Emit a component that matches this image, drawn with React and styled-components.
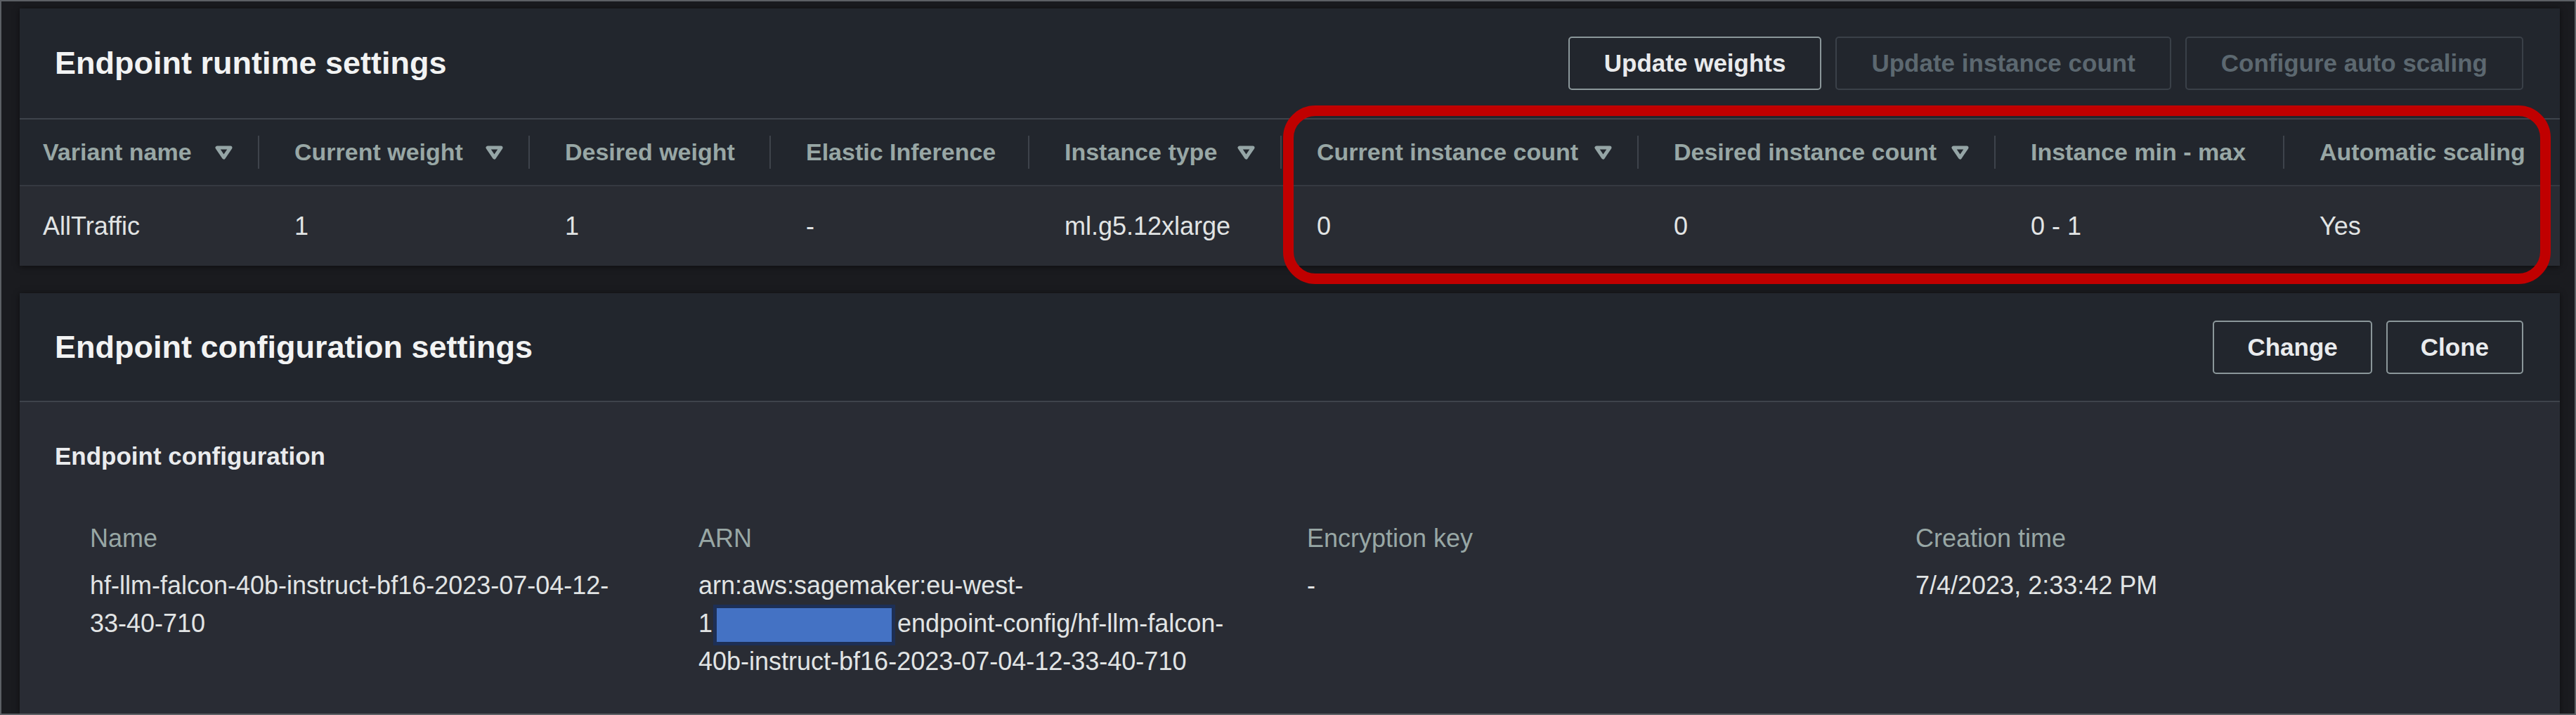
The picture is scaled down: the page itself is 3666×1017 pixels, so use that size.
import React from 'react';
import styled, { createGlobalStyle } from 'styled-components';

const GlobalStyle = createGlobalStyle`
  html, body {
    margin: 0;
    padding: 0;
    background: #1a1b1f;
  }
  body {
    font-family: "Liberation Sans", Arial, sans-serif;
  }
`;

const Frame = styled.div`
  box-sizing: border-box;
  width: 3666px;
  height: 1017px;
  border: 2px solid #5c5f64;
  padding: 10px 21px 0 26px;
  display: flex;
  flex-direction: column;
  gap: 39px;
  background: #1a1b1f;
  overflow: hidden;
`;

const Panel = styled.section`
  position: relative;
  display: flex;
  flex-direction: column;
  flex: ${(p) => (p.$grow ? 1 : 'none')};
  background: #22262d;
  box-shadow: 0 1px 8px rgba(0, 0, 0, 0.55);
`;

const PanelHeader = styled.header`
  box-sizing: border-box;
  height: ${(p) => p.$height}px;
  display: flex;
  align-items: center;
  justify-content: space-between;
  padding: 0 52px 0 50px;
  border-bottom: 2px solid #3e434b;
`;

const Title = styled.h2`
  margin: 0;
  font-size: 45px;
  line-height: 56px;
  font-weight: 700;
  color: #f2f3f3;
`;

const Actions = styled.div`
  display: flex;
  gap: 20px;
`;

const Button = styled.button`
  box-sizing: border-box;
  height: 76px;
  padding: 0 ${(p) => p.$pad ?? 49}px;
  background: transparent;
  border: 2px solid ${(p) => (p.disabled ? '#3a4048' : '#8b979a')};
  border-radius: 5px;
  color: ${(p) => (p.disabled ? '#5c6870' : '#e9ebed')};
  font: 700 35px "Liberation Sans", Arial, sans-serif;
  white-space: nowrap;
`;

// runtime table
const Table = styled.div`
  display: grid;
  grid-template-columns: ${(p) => p.$cols};
`;

const HeadCell = styled.div`
  box-sizing: border-box;
  height: 95px;
  display: flex;
  align-items: center;
  padding-left: ${(p) => (p.$first ? 33 : 50)}px;
  border-bottom: 2px solid #353941;
  color: #98a7a5;
  font-size: 34px;
  font-weight: 700;
`;

const HeadLabel = styled.span`
  flex: 1;
  white-space: nowrap;
`;

const SortIcon = styled.svg`
  width: 25px;
  height: 20px;
  margin-right: 36px;
  flex: none;
`;

const Divider = styled.span`
  width: 2px;
  height: 47px;
  background: #3e434b;
  flex: none;
`;

const BodyCell = styled.div`
  box-sizing: border-box;
  height: 113px;
  display: flex;
  align-items: center;
  padding-left: ${(p) => (p.$first ? 33 : 50)}px;
  background: #292c33;
  color: #e1e4e4;
  font-size: 36px;
  white-space: nowrap;
`;

const Annotation = styled.div`
  position: absolute;
  left: 1798px;
  top: 138px;
  width: 1804px;
  height: 254px;
  box-sizing: border-box;
  border: 15px solid #c00000;
  border-radius: 46px;
  pointer-events: none;
`;

// configuration panel
const Body = styled.div`
  flex: 1;
  background: #292c34;
  padding: 52px 51px 0 50px;
`;

const SubTitle = styled.h3`
  margin: 0;
  font-size: 35px;
  line-height: 50px;
  font-weight: 700;
  color: #e9ebed;
`;

const Fields = styled.div`
  display: grid;
  grid-template-columns: repeat(4, 866px);
  margin-top: 65px;
  padding-left: 50px;
`;

const Field = styled.div`
  display: flex;
  flex-direction: column;
`;

const FieldLabel = styled.div`
  font-size: 36px;
  line-height: 54px;
  color: #98a7a5;
`;

const FieldValue = styled.div`
  margin-top: 13px;
  font-size: 36px;
  line-height: 54px;
  color: #e1e4e4;
  white-space: nowrap;
`;

const Redacted = styled.span`
  display: inline-block;
  box-sizing: border-box;
  width: 259px;
  height: 58px;
  margin: -6px 3px -6px 1px;
  vertical-align: middle;
  background: #4472c4;
  border: 5px solid #1d2f55;
`;

const SortTriangle = () => (
  <SortIcon viewBox="0 0 25 20">
    <polygon
      points="3,3 22,3 12.5,17"
      fill="none"
      stroke="#95a5a6"
      strokeWidth="5"
      strokeLinejoin="round"
    />
  </SortIcon>
);

const columns = [
  { label: 'Variant name', width: 341, sort: true, value: 'AllTraffic' },
  { label: 'Current weight', width: 385, sort: true, value: '1' },
  { label: 'Desired weight', width: 343, value: '1' },
  { label: 'Elastic Inference', width: 368, value: '-' },
  { label: 'Instance type', width: 359, sort: true, value: 'ml.g5.12xlarge' },
  { label: 'Current instance count', width: 508, sort: true, value: '0' },
  { label: 'Desired instance count', width: 508, sort: true, value: '0' },
  { label: 'Instance min - max', width: 411, value: '0 - 1' },
  { label: 'Automatic scaling', width: 392, value: 'Yes', last: true },
];

const fields = [
  {
    label: 'Name',
    lines: ['hf-llm-falcon-40b-instruct-bf16-2023-07-04-12-', '33-40-710'],
  },
  {
    label: 'ARN',
    lines: [
      'arn:aws:sagemaker:eu-west-',
      <>
        1<Redacted />endpoint-config/hf-llm-falcon-
      </>,
      '40b-instruct-bf16-2023-07-04-12-33-40-710',
    ],
  },
  { label: 'Encryption key', lines: ['-'] },
  { label: 'Creation time', lines: ['7/4/2023, 2:33:42 PM'] },
];

export default function App() {
  return (
    <>
      <GlobalStyle />
      <Frame>
        <Panel>
          <PanelHeader $height={158}>
            <Title>Endpoint runtime settings</Title>
            <Actions>
              <Button>Update weights</Button>
              <Button disabled>Update instance count</Button>
              <Button disabled>Configure auto scaling</Button>
            </Actions>
          </PanelHeader>

          <Table $cols={columns.map((c) => `${c.width}px`).join(' ')}>
            {columns.map((c, i) => (
              <HeadCell key={c.label} $first={i === 0}>
                <HeadLabel>{c.label}</HeadLabel>
                {c.sort && <SortTriangle />}
                {!c.last && <Divider />}
              </HeadCell>
            ))}
            {columns.map((c, i) => (
              <BodyCell key={c.label} $first={i === 0}>
                {c.value}
              </BodyCell>
            ))}
          </Table>

          <Annotation />
        </Panel>

        <Panel $grow>
          <PanelHeader $height={155}>
            <Title>Endpoint configuration settings</Title>
            <Actions>
              <Button $pad={47}>Change</Button>
              <Button $pad={47}>Clone</Button>
            </Actions>
          </PanelHeader>
          <Body>
            <SubTitle>Endpoint configuration</SubTitle>
            <Fields>
              {fields.map((f) => (
                <Field key={f.label}>
                  <FieldLabel>{f.label}</FieldLabel>
                  <FieldValue>
                    {f.lines.map((line, i) => (
                      <div key={i}>{line}</div>
                    ))}
                  </FieldValue>
                </Field>
              ))}
            </Fields>
          </Body>
        </Panel>
      </Frame>
    </>
  );
}
